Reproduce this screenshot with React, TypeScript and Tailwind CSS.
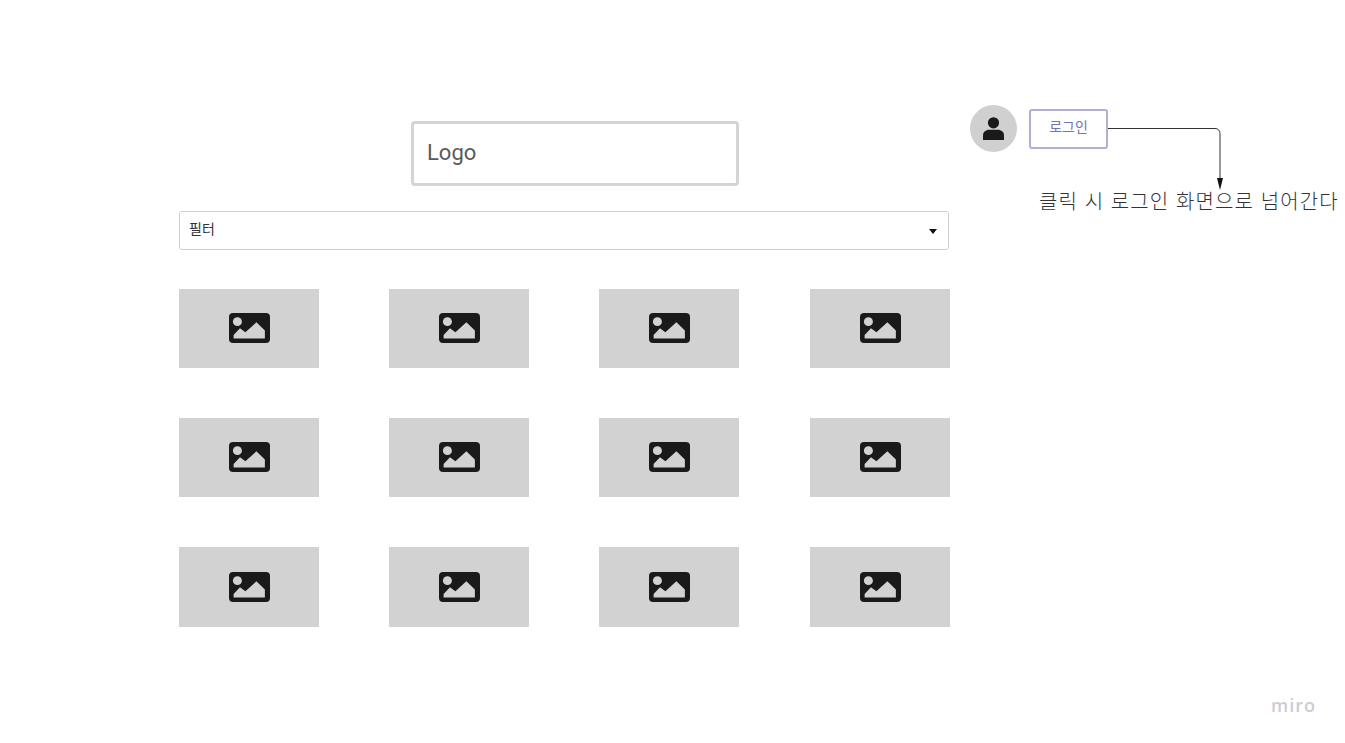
const koFont = "font-['Liberation_Sans','Noto_Sans_CJK_KR',sans-serif]";

const ImageIcon = () => (
  <svg width="41" height="30" viewBox="0 0 40 30" preserveAspectRatio="none" fill="none">
    <rect width="40" height="30" rx="4" fill="#1a1a1a" />
    <circle cx="8.2" cy="8.7" r="4.4" fill="#d2d2d2" />
    <path d="M4.5 25.5V22L10.7 15.3L16 19.3L26.7 9.3L35 17.5V25.5Z" fill="#d2d2d2" />
  </svg>
);

const UserIcon = () => (
  <svg width="21" height="23" viewBox="0 0 21 23" fill="#1a1a1a">
    <circle cx="10.5" cy="5.8" r="5.6" />
    <path d="M0 23V18.5C0 15 3 12.8 6 12.8H15C18 12.8 21 15 21 18.5V23Z" />
  </svg>
);

const Thumb = () => (
  <div className="flex w-[140px] items-center justify-center bg-[#d2d2d2] pb-px">
    <ImageIcon />
  </div>
);

export default function App() {
  const thumbs = Array.from({ length: 12 });

  return (
    <div className={`relative flex h-[743px] w-[1345px] overflow-hidden bg-white ${koFont}`}>
      {/* Main wireframe */}
      <div className="w-[970px] shrink-0 pl-[179px] pt-[121px]">
        <div className="ml-[232px] flex h-[65px] w-[328px] items-center rounded-[4px] border-[3px] border-[#d4d4d4] pl-[13px] pb-[2px] font-['Roboto',sans-serif] text-[22px] text-[#5a5a5a]">
          Logo
        </div>

        <div className="mt-[25px] flex h-[39px] w-[770px] items-center justify-between rounded-[3px] border border-[#cfcfcf] pl-[9px] pr-[11px] pb-[2px] text-[14px] text-[#333333]">
          <span>필터</span>
          <span className="mt-[3px] h-0 w-0 border-x-[4.5px] border-t-[5px] border-x-transparent border-t-[#111111]" />
        </div>

        <div className="mt-[39px] grid h-[338px] w-[771px] grid-cols-[140px_140px_141px_140px] grid-rows-[79px_79px_80px] gap-x-[70px] gap-y-[50px]">
          {thumbs.map((_, i) => (
            <Thumb key={i} />
          ))}
        </div>
      </div>

      {/* Login annotation */}
      <div className="flex-1 pt-[105px]">
        <div className="flex items-center gap-[12px]">
          <div className="flex h-[47px] w-[47px] items-center justify-center rounded-full bg-[#d0d0d0]">
            <UserIcon />
          </div>
          <button className="flex h-[40px] w-[79px] items-center justify-center rounded-[3px] border-2 border-[#b0b0d4] pb-[3px] text-[14px] text-[#7474b4]">
            로그인
          </button>
        </div>
        <p className="ml-[69px] mt-[36px] whitespace-nowrap text-[20px] font-light leading-[28px] tracking-[1.1px] text-[#333333]">
          클릭 시 로그인 화면으로 넘어간다
        </p>
      </div>

      {/* Connector */}
      <svg className="absolute left-[1105px] top-[125px]" width="125" height="70" viewBox="0 0 125 70" fill="none">
        <path d="M3 3.5H110C113 3.5 115 5.5 115 8.5V55" stroke="#333333" strokeWidth="1" />
        <path d="M115 65L112 53H118Z" fill="#111111" />
      </svg>

      <span className="absolute left-[1271px] top-[693px] font-['Open_Sans',sans-serif] text-[18px] font-semibold leading-[24px] tracking-[1px] text-[#cbcbd6]">
        miro
      </span>
    </div>
  );
}
